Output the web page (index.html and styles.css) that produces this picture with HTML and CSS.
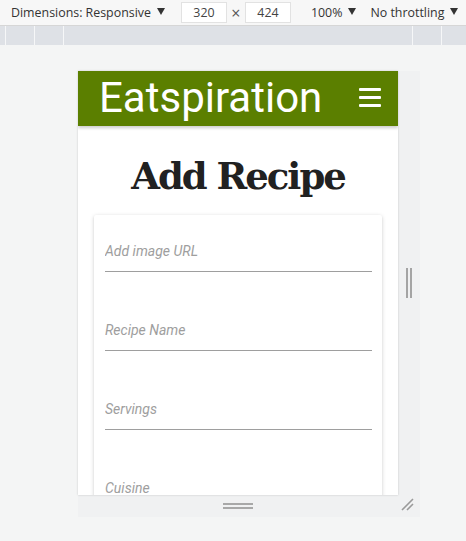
FILE: index.html
```html
<!DOCTYPE html>
<html lang="en">
<head>
<meta charset="utf-8">
<title>Eatspiration - Add Recipe</title>
<link rel="stylesheet" href="styles.css">
</head>
<body>
<div class="toolbar">
  <div class="tb-item tb-dims">Dimensions: Responsive <span class="tri"></span></div>
  <div class="tb-size">
    <span class="tb-box">320</span>
    <span class="tb-x">×</span>
    <span class="tb-box">424</span>
  </div>
  <div class="tb-item tb-zoom">100% <span class="tri"></span></div>
  <div class="tb-item tb-throttle">No throttling <span class="tri"></span></div>
</div>
<div class="ruler">
  <span class="rseg s1"></span><span class="rseg s2"></span><span class="rseg s3"></span><span class="rseg s4"></span><span class="rseg s5"></span><span class="rseg s6"></span>
</div>
<div class="stage">
  <div class="frame">
    <div class="device">
      <header class="appbar">
        <span class="brand">Eatspiration</span>
        <span class="burger"><i></i><i></i><i></i></span>
      </header>
      <h1 class="title">Add Recipe</h1>
      <form class="card">
        <div class="field"><input class="inp" type="text" placeholder="Add image URL"></div>
        <div class="field"><input class="inp" type="text" placeholder="Recipe Name"></div>
        <div class="field"><input class="inp" type="text" placeholder="Servings"></div>
        <div class="field"><input class="inp" type="text" placeholder="Cuisine"></div>
        <div class="field"><input class="inp" type="text" placeholder="Ingredients"></div>
      </form>
    </div>
    <div class="vgutter"><span class="vhandle"></span></div>
    <div class="hgutter"><span class="hhandle"></span></div>
    <div class="corner">
      <svg width="22" height="22" viewBox="0 0 22 22"><path d="M4 15 L15 4 M9 15 L15 9" stroke="#9a9a9a" stroke-width="1.6" fill="none"/></svg>
    </div>
  </div>
</div>
</body>
</html>
```
FILE: styles.css
```css
html, body {
  margin: 0;
  padding: 0;
}
body {
  width: 466px;
  height: 541px;
  overflow: hidden;
  background: #f4f5f5;
  font-family: "Open Sans", "Noto Sans", sans-serif;
}
.toolbar {
  height: 26px;
  box-sizing: border-box;
  background: #f7f7f7;
  border-bottom: 1px solid #d6d6d6;
  display: flex;
  align-items: center;
  font-size: 12.4px;
  color: #333;
}
.tb-item {
  display: flex;
  align-items: center;
  gap: 6px;
  white-space: nowrap;
}
.tb-dims { margin-left: 11px; }
.tb-size {
  display: flex;
  align-items: center;
  margin-left: 16px;
  height: 22px;
}
.tb-box {
  display: inline-block;
  width: 46px;
  height: 21px;
  box-sizing: border-box;
  border: 1px solid #e2e2e2;
  background: #fff;
  text-align: center;
  line-height: 19px;
  color: #444;
}
.tb-x {
  width: 18px;
  text-align: center;
  color: #555;
  font-size: 16px;
  line-height: 16px;
}
.tb-zoom { margin-left: 20px; }
.tb-throttle { margin-left: 14px; }
.tri {
  display: inline-block;
  width: 0;
  height: 0;
  border-left: 4px solid transparent;
  border-right: 4px solid transparent;
  border-top: 7px solid #333;
  margin-top: -2px;
}
.ruler {
  height: 19px;
  background: #dee1e6;
  display: flex;
}
.rseg {
  height: 100%;
  border-right: 1px solid #f6f7f8;
}
.s1 { width: 5px; }
.s2 { width: 28px; }
.s3 { width: 28px; }
.s4 { width: 350px; }
.s5 { width: 28px; }
.s6 { width: 24px; border-right: 0; }

.stage {
  padding: 26px 0 0 78px;
}
.frame {
  display: grid;
  grid-template-columns: 320px 22px;
  grid-template-rows: 424px 22px;
  width: 342px;
}
.device {
  background: #fff;
  overflow: hidden;
  box-shadow: 0 0 2px rgba(0, 0, 0, 0.18);
  font-family: Roboto, "Liberation Sans", sans-serif;
  position: relative;
  z-index: 1;
}
.vgutter, .hgutter, .corner {
  background: #f0f1f2;
  display: flex;
  align-items: center;
  justify-content: center;
}
.vhandle {
  width: 6px;
  height: 30px;
  border-left: 2px solid #a4a4a4;
  border-right: 2px solid #a4a4a4;
  box-sizing: border-box;
  margin-top: -1px;
}
.hhandle {
  width: 30px;
  height: 6px;
  border-top: 2px solid #a8a8a8;
  border-bottom: 2px solid #a8a8a8;
  box-sizing: border-box;
  margin-top: -1px;
}
.corner svg { display: block; }

.appbar {
  height: 55px;
  background: #5b7f00;
  display: flex;
  align-items: center;
  justify-content: space-between;
  padding: 0 17px 0 21px;
  box-shadow: 0 2px 3px rgba(0, 0, 0, 0.2);
  position: relative;
}
.brand {
  color: #fff;
  font-size: 42px;
  line-height: 55px;
  font-weight: 400;
  margin-top: -2px;
}
.burger {
  display: flex;
  flex-direction: column;
  gap: 5px;
  width: 22px;
  margin-top: -2px;
}
.burger i {
  display: block;
  height: 3px;
  background: #fff;
  border-radius: 1px;
}
.title {
  margin: 0;
  padding: 35px 0 0;
  height: 66px;
  box-sizing: border-box;
  text-align: center;
  font-family: "DejaVu Serif", "Liberation Serif", serif;
  font-weight: bold;
  font-size: 37px;
  line-height: 31px;
  letter-spacing: -2px;
  color: #212121;
}
.card {
  margin: 23px 16px 0;
  background: #fff;
  border-radius: 2px;
  box-shadow: 0 1px 4px rgba(0, 0, 0, 0.16), 0 1px 2px rgba(0, 0, 0, 0.08);
  padding: 16px 10px 20px 11px;
  display: flex;
  flex-direction: column;
  gap: 38px;
}
.field { display: block; }
.inp {
  display: block;
  width: 100%;
  box-sizing: content-box;
  height: 40px;
  padding: 0;
  margin: 0;
  border: 0;
  border-bottom: 1px solid #9e9e9e;
  outline: none;
  background: transparent;
  font-family: Roboto, "Liberation Sans", sans-serif;
  font-size: 14px;
  color: #333;
}
.inp::placeholder {
  color: #9e9e9e;
  font-style: italic;
  opacity: 1;
}
```
